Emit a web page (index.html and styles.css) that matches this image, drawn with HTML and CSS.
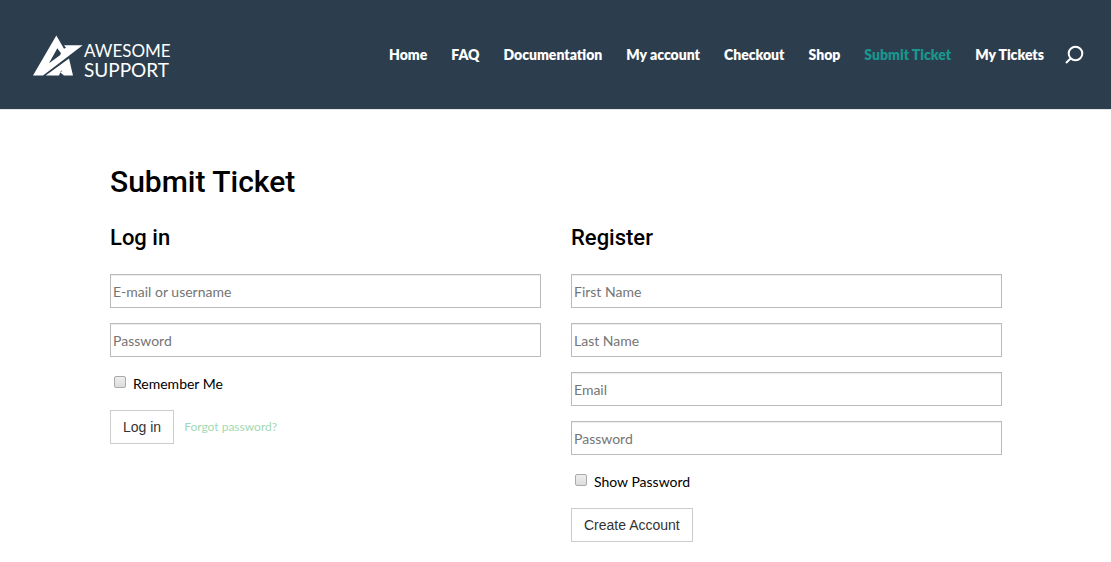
FILE: index.html
```html
<!DOCTYPE html>
<html lang="en">
<head>
<meta charset="utf-8">
<meta name="viewport" content="width=device-width, initial-scale=1">
<title>Submit Ticket - Awesome Support</title>
<link rel="stylesheet" href="styles.css">
</head>
<body>
<header class="site-header">
  <a class="logo" href="#">
    <svg class="logo-mark" viewBox="38 32 150 120" aria-hidden="true">
      <path fill-rule="evenodd" d="M108 32 L38 152 H68 L187 61 H131 L137 69 L131 72 Z M111 70 L122 85 L119 91 L86 115 Z"/>
      <path d="M76 152 L146 101 L158 152 H131 L120 143 L126 138 L122 138 L116 152 Z"/>
    </svg>
    <span class="logo-text">
      <span class="logo-top">AWESOME</span>
      <span class="logo-bottom">SUPPORT</span>
    </span>
  </a>
  <nav class="main-nav">
    <a href="#">Home</a>
    <a href="#">FAQ</a>
    <a href="#">Documentation</a>
    <a href="#">My account</a>
    <a href="#">Checkout</a>
    <a href="#">Shop</a>
    <a class="current" href="#">Submit Ticket</a>
    <a href="#">My Tickets</a>
    <button class="search" type="button" aria-label="Search">
      <svg viewBox="0 0 20 20" aria-hidden="true"><circle cx="11.5" cy="8.5" r="6.8"/><path d="M6.5 13.5 L2 18"/></svg>
    </button>
  </nav>
</header>
<main class="content">
  <h1>Submit Ticket</h1>
  <div class="columns">
    <form class="form">
      <h2>Log in</h2>
      <input class="field" type="text" placeholder="E-mail or username" aria-label="E-mail or username">
      <input class="field" type="password" placeholder="Password" aria-label="Password">
      <label class="check"><input type="checkbox">Remember Me</label>
      <div class="actions">
        <button class="btn" type="button">Log in</button>
        <a class="forgot" href="#">Forgot password?</a>
      </div>
    </form>
    <form class="form">
      <h2>Register</h2>
      <input class="field" type="text" placeholder="First Name" aria-label="First Name">
      <input class="field" type="text" placeholder="Last Name" aria-label="Last Name">
      <input class="field" type="email" placeholder="Email" aria-label="Email">
      <input class="field" type="password" placeholder="Password" aria-label="Password">
      <label class="check"><input type="checkbox">Show Password</label>
      <div class="actions">
        <button class="btn" type="button">Create Account</button>
      </div>
    </form>
  </div>
</main>
</body>
</html>
```
FILE: styles.css
```css
* { box-sizing: border-box; }

body {
  margin: 0;
  background: #fff;
  color: #000;
  font: 14px/24px Lato, sans-serif;
}

.site-header {
  display: flex;
  align-items: flex-start;
  justify-content: space-between;
  padding: 35px 27px 30px 33px;
  background: #2c3e4d;
  box-shadow: 0 1px 0 rgba(0, 0, 0, 0.1);
}

.logo {
  display: flex;
  align-items: flex-start;
  gap: 1px;
  color: #fff;
  text-decoration: none;
}

.logo-mark {
  width: 50px;
  height: 41px;
  fill: #fff;
}

.logo-text {
  display: flex;
  flex-direction: column;
  padding-top: 7px;
}

.logo-top {
  font-size: 17px;
  line-height: 18px;
}

.logo-bottom {
  font-size: 19px;
  line-height: 19px;
}

.main-nav {
  display: flex;
  align-items: center;
  gap: 24px;
  padding-top: 8px;
  font-weight: 800;
}

.main-nav a {
  color: #fff;
  text-decoration: none;
}

.main-nav .current { color: #1a968c; }

.search {
  width: 20px;
  height: 20px;
  margin-left: -4px;
  padding: 0;
  border: 0;
  background: none;
}

.search svg {
  display: block;
  fill: none;
  stroke: #fff;
  stroke-width: 2;
}

.content { padding: 57px 109px 20px 110px; }

h1, h2 {
  margin: 0;
  font-family: Roboto, sans-serif;
  font-weight: 500;
}

h1 {
  font-size: 30px;
  line-height: 32px;
}

h2 {
  font-size: 22px;
  line-height: 24px;
  margin-bottom: 9px;
}

.columns {
  display: grid;
  grid-template-columns: 1fr 1fr;
  gap: 30px;
  margin-top: 28px;
}

.form {
  display: flex;
  flex-direction: column;
  gap: 15px;
}

.field {
  width: 100%;
  height: 34px;
  padding: 2px;
  border: 1px solid #bbb;
  background: #fff;
  box-shadow: inset 0 1px 1px rgba(0, 0, 0, 0.075);
  color: #4e4e4e;
  font: 14px Lato, sans-serif;
}

.field::placeholder { color: #757575; }

.check {
  display: flex;
  align-items: center;
  gap: 7px;
  padding-left: 4px;
  line-height: 23px;
}

.check input {
  appearance: none;
  width: 12px;
  height: 12px;
  margin: 0 0 4px;
  border: 1px solid #aaa;
  border-radius: 2px;
  background: linear-gradient(#eee, #dcdcdc);
}

.check input:checked { background: #555; }

.actions {
  display: flex;
  align-items: center;
  gap: 10px;
}

.btn {
  height: 34px;
  padding: 0 12px;
  border: 1px solid #ccc;
  background: #fff;
  color: #333;
  font: 14px "Liberation Sans", Arial, sans-serif;
}

.forgot {
  color: #a3d9b1;
  font-size: 12px;
  text-decoration: none;
}
```
